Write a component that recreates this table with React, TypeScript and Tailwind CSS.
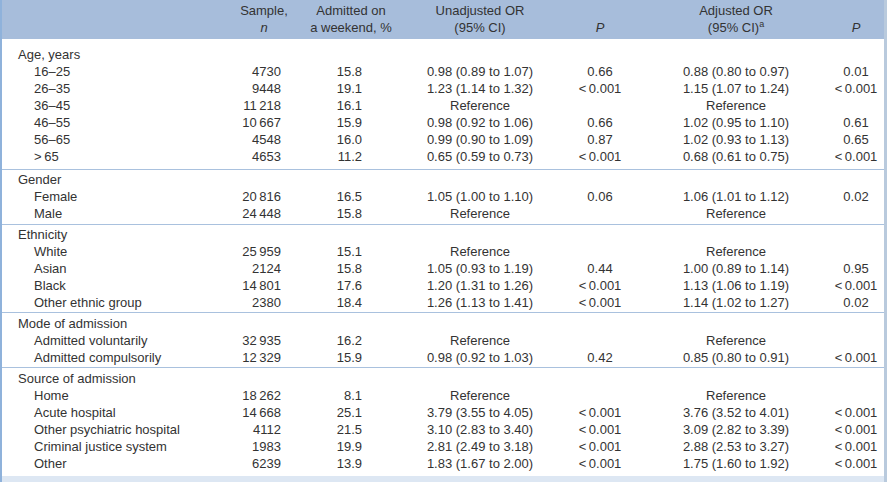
import React from 'react';

const T = '\u2009';

type Row = [string, string, string, string, string, string, string];

interface Group {
  title: string;
  pad: string;
  rows: Row[];
}

const groups: Group[] = [
  {
    title: 'Age, years',
    pad: 'pt-[7px] pb-[4px]',
    rows: [
      ['16–25', '4730', '15.8', '0.98 (0.89 to 1.07)', '0.66', '0.88 (0.80 to 0.97)', '0.01'],
      ['26–35', '9448', '19.1', '1.23 (1.14 to 1.32)', `<${T}0.001`, '1.15 (1.07 to 1.24)', `<${T}0.001`],
      ['36–45', `11${T}218`, '16.1', 'Reference', '', 'Reference', ''],
      ['46–55', `10${T}667`, '15.9', '0.98 (0.92 to 1.06)', '0.66', '1.02 (0.95 to 1.10)', '0.61'],
      ['56–65', '4548', '16.0', '0.99 (0.90 to 1.09)', '0.87', '1.02 (0.93 to 1.13)', '0.65'],
      [`>${T}65`, '4653', '11.2', '0.65 (0.59 to 0.73)', `<${T}0.001`, '0.68 (0.61 to 0.75)', `<${T}0.001`],
    ],
  },
  {
    title: 'Gender',
    pad: 'border-t border-[#a9c1de] pt-[1px] pb-[2px]',
    rows: [
      ['Female', `20${T}816`, '16.5', '1.05 (1.00 to 1.10)', '0.06', '1.06 (1.01 to 1.12)', '0.02'],
      ['Male', `24${T}448`, '15.8', 'Reference', '', 'Reference', ''],
    ],
  },
  {
    title: 'Ethnicity',
    pad: 'border-t border-[#a9c1de] pt-[1px] pb-[1px]',
    rows: [
      ['White', `25${T}959`, '15.1', 'Reference', '', 'Reference', ''],
      ['Asian', '2124', '15.8', '1.05 (0.93 to 1.19)', '0.44', '1.00 (0.89 to 1.14)', '0.95'],
      ['Black', `14${T}801`, '17.6', '1.20 (1.31 to 1.26)', `<${T}0.001`, '1.13 (1.06 to 1.19)', `<${T}0.001`],
      ['Other ethnic group', '2380', '18.4', '1.26 (1.13 to 1.41)', `<${T}0.001`, '1.14 (1.02 to 1.27)', '0.02'],
    ],
  },
  {
    title: 'Mode of admission',
    pad: 'border-t border-[#a9c1de] pt-[2px] pb-[1px]',
    rows: [
      ['Admitted voluntarily', `32${T}935`, '16.2', 'Reference', '', 'Reference', ''],
      ['Admitted compulsorily', `12${T}329`, '15.9', '0.98 (0.92 to 1.03)', '0.42', '0.85 (0.80 to 0.91)', `<${T}0.001`],
    ],
  },
  {
    title: 'Source of admission',
    pad: 'border-t border-[#a9c1de] pt-[2px] pb-[4px]',
    rows: [
      ['Home', `18${T}262`, '8.1', 'Reference', '', 'Reference', ''],
      ['Acute hospital', `14${T}668`, '25.1', '3.79 (3.55 to 4.05)', `<${T}0.001`, '3.76 (3.52 to 4.01)', `<${T}0.001`],
      ['Other psychiatric hospital', '4112', '21.5', '3.10 (2.83 to 3.40)', `<${T}0.001`, '3.09 (2.82 to 3.39)', `<${T}0.001`],
      ['Criminal justice system', '1983', '19.9', '2.81 (2.49 to 3.18)', `<${T}0.001`, '2.88 (2.53 to 3.27)', `<${T}0.001`],
      ['Other', '6239', '13.9', '1.83 (1.67 to 2.00)', `<${T}0.001`, '1.75 (1.60 to 1.92)', `<${T}0.001`],
    ],
  },
];

// shared column template
const cols = 'grid grid-cols-[228px_68px_106px_152px_88px_184px_56px]';

function DataRow({ row }: { row: Row }) {
  const [label, n, pct, uor, p1, aor, p2] = row;
  return (
    <div className={`${cols} h-[17px] leading-[17px]`}>
      <div className="pl-[32px] whitespace-nowrap">{label}</div>
      <div className="text-right pr-[17px]">{n}</div>
      <div className="text-right pr-[42px]">{pct}</div>
      <div className="text-center whitespace-nowrap">{uor}</div>
      <div className="text-center">{p1}</div>
      <div className="text-center whitespace-nowrap">{aor}</div>
      <div className="text-center">{p2}</div>
    </div>
  );
}

export default function App() {
  return (
    <div
      className="w-[887px] h-[482px] bg-white text-[#333] text-[13px] flex flex-col border-l-2 border-l-[#8fb2db] border-r-[3px] border-r-[#b9cadd] overflow-hidden"
      style={{ fontFamily: '"Liberation Sans", Arial, sans-serif' }}
    >
      {/* header */}
      <div className={`${cols} bg-[#a7bddb] h-[39px] pt-[2px] leading-[17px]`}>
        <div />
        <div className="text-center">
          Sample,
          <br />
          <i>n</i>
        </div>
        <div className="text-center">
          Admitted on
          <br />
          a weekend, %
        </div>
        <div className="text-center">
          Unadjusted OR
          <br />
          (95% CI)
        </div>
        <div className="text-center">
          <br />
          <i>P</i>
        </div>
        <div className="text-center">
          Adjusted OR
          <br />
          (95% CI)<span className="relative -top-[5px] text-[9px]">a</span>
        </div>
        <div className="text-center">
          <br />
          <i>P</i>
        </div>
      </div>

      {groups.map((g) => (
        <div key={g.title} className={g.pad}>
          <div className="h-[17px] leading-[17px] pl-[16px]">{g.title}</div>
          {g.rows.map((r) => (
            <DataRow key={r[0]} row={r} />
          ))}
        </div>
      ))}

      <div className="flex-1 bg-[#dde7f3]" />
    </div>
  );
}
